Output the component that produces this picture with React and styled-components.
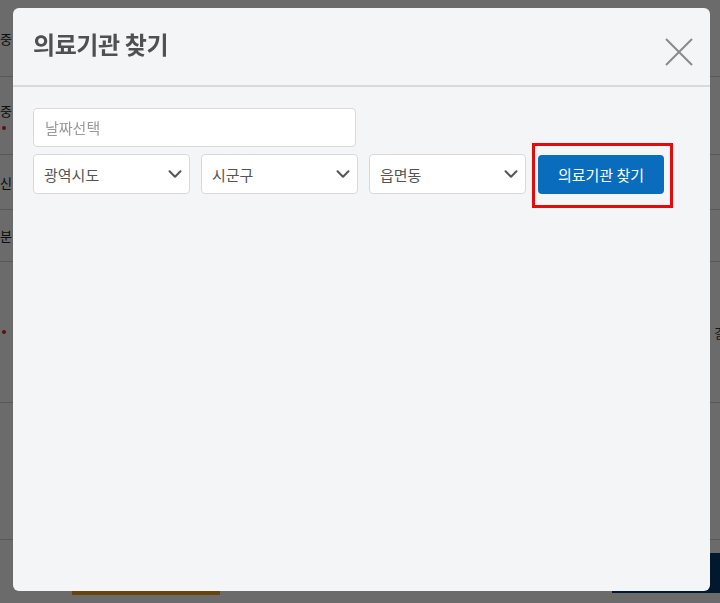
import React from 'react';
import styled, { createGlobalStyle } from 'styled-components';
import { ChevronDown } from 'lucide-react';

const GlobalStyle = createGlobalStyle`
  html, body {
    margin: 0;
    padding: 0;
    height: 100%;
    overflow: hidden;
    background: #fff;
    font-family: "Noto Sans CJK KR", "Noto Sans", sans-serif;
  }
`;

// the page behind the modal (dimmed)
const Page = styled.div`
  width: 750px;
  height: 603px;
  margin-left: -30px;
  background: #fff;
`;

const Row = styled.div`
  display: flex;
  align-items: center;
  box-sizing: border-box;
  height: ${p => p.$h}px;
  border-bottom: 1px solid #d2d2d2;
`;

const Label = styled.div`
  width: 42px;
  text-align: right;
  font-size: 13px;
  color: #222;
  display: flex;
  flex-direction: column;
  align-items: flex-end;
  gap: 6px;
`;

const Required = styled.span`
  width: 4px;
  height: 4px;
  border-radius: 50%;
  background: #d22;
  margin-right: 6px;
`;

const SideText = styled.div`
  margin-left: auto;
  margin-right: -6px;
  font-size: 13px;
  color: #333;
`;

const Footer = styled.div`
  display: flex;
  align-items: flex-end;
  height: 63px;
  padding-left: 102px;
`;

const OrangeBar = styled.div`
  width: 148px;
  height: 10px;
  margin-bottom: 8px;
  background: #f2a21c;
  border-radius: 4px 4px 0 0;
`;

const NavyBlock = styled.div`
  margin-left: auto;
  width: 108px;
  height: 40px;
  margin-bottom: 10px;
  background: #073a6e;
`;

const Overlay = styled.div`
  position: fixed;
  inset: 0;
  background: rgba(0, 0, 0, 0.58);
  padding: 8px 10px 12px 13px;
  box-sizing: border-box;
  display: flex;
`;

const Modal = styled.div`
  flex: 1;
  background: #f4f5f7;
  border-radius: 6px;
  display: flex;
  flex-direction: column;
  overflow: hidden;
`;

const Header = styled.div`
  height: 77px;
  border-bottom: 2px solid #d8d9dc;
  display: flex;
  align-items: center;
  justify-content: space-between;
  padding: 0 16px 0 20px;
`;

const Title = styled.h2`
  margin: 0;
  margin-top: -6px;
  font-size: 24px;
  font-weight: 700;
  color: #505050;
  letter-spacing: -0.4px;
`;

const CloseBtn = styled.button`
  width: 30px;
  height: 30px;
  padding: 0;
  border: 0;
  background: none;
  margin-top: 11px;
  cursor: pointer;
`;

const Body = styled.div`
  padding: 21px 20px;
  display: flex;
  flex-direction: column;
  gap: 7px;
`;

const DateInput = styled.input`
  width: 323px;
  height: 39px;
  box-sizing: border-box;
  border: 1px solid #d9d9d9;
  border-radius: 4px;
  background: #fff;
  padding: 0 11px;
  font-family: inherit;
  font-size: 15px;
  color: #333;
  outline: none;

  &::placeholder {
    color: #9a9a9a;
  }
`;

const FilterRow = styled.div`
  display: flex;
  gap: 11px;
  align-items: flex-start;
`;

const Select = styled.div`
  width: 157px;
  height: 40px;
  box-sizing: border-box;
  border: 1px solid #d9d9d9;
  border-radius: 4px;
  background: #fff;
  display: flex;
  align-items: center;
  justify-content: space-between;
  padding: 0 3px 0 10px;
  font-size: 15px;
  color: #555;
`;

const Highlight = styled.div`
  position: relative;
  margin-top: 1px;
  margin-left: 1px;

  &::after {
    content: '';
    position: absolute;
    inset: -12px -9px -14px -6px;
    border: 3px solid #e20c0c;
    pointer-events: none;
  }
`;

const SearchBtn = styled.button`
  width: 126px;
  height: 39px;
  border: 0;
  border-radius: 4px;
  background: #0a6cbd;
  color: #fff;
  font-family: inherit;
  font-size: 15px;
  cursor: pointer;
`;

const regions = ['광역시도', '시군구', '읍면동'];

const App = () => {
  return (
    <>
      <GlobalStyle />
      <Page>
        <Row $h={77}>
          <Label>진행중</Label>
        </Row>
        <Row $h={78}>
          <Label>
            <span>접수중</span>
            <Required />
          </Label>
        </Row>
        <Row $h={55}>
          <Label>신</Label>
        </Row>
        <Row $h={52}>
          <Label>구분</Label>
        </Row>
        <Row $h={141}>
          <Label>
            <Required />
          </Label>
          <SideText>길</SideText>
        </Row>
        <Row $h={137}>
          <Label />
        </Row>
        <Footer>
          <OrangeBar />
          <NavyBlock />
        </Footer>
      </Page>

      <Overlay>
        <Modal>
          <Header>
            <Title>의료기관 찾기</Title>
            <CloseBtn aria-label="닫기">
              <svg width="30" height="30" viewBox="0 0 30 30">
                <path d="M2 2 L28 28 M28 2 L2 28" stroke="#8a8a8a" strokeWidth="2" fill="none" />
              </svg>
            </CloseBtn>
          </Header>
          <Body>
            <DateInput placeholder="날짜선택" />
            <FilterRow>
              {regions.map(r => (
                <Select key={r}>
                  <span>{r}</span>
                  <ChevronDown size={22} color="#555" strokeWidth={2.2} />
                </Select>
              ))}
              <Highlight>
                <SearchBtn>의료기관 찾기</SearchBtn>
              </Highlight>
            </FilterRow>
          </Body>
        </Modal>
      </Overlay>
    </>
  );
};

export default App;
